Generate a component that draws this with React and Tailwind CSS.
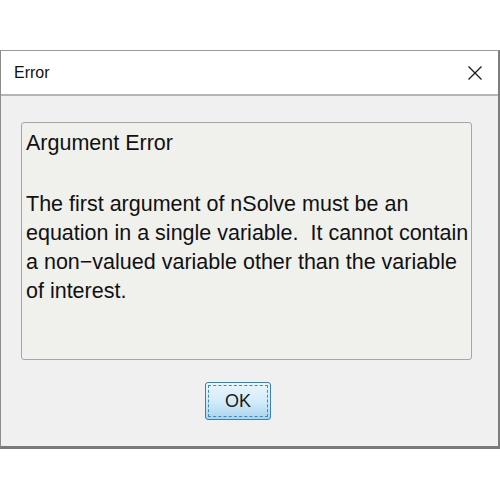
const CloseIcon = () => (
  <svg width="16" height="16" viewBox="0 0 16 16" className="block">
    <path d="M1.5 1.5 L14.5 14.5 M14.5 1.5 L1.5 14.5" stroke="#1a1a1a" strokeWidth="1.3" fill="none" />
  </svg>
);

const lines = [
  "The first argument of nSolve must be an",
  "equation in a single variable.\u00a0 It cannot contain",
  "a non\u2212valued variable other than the variable",
  "of interest.",
];

export default function App() {
  return (
    <div className="w-[500px] h-[500px] bg-white pt-[50px] font-['Liberation_Sans',Arial,sans-serif]">
      <div className="w-[500px] h-[399px] flex flex-col border-t border-l border-r-2 border-b-[3px] border-t-[#9a9a9a] border-l-[#8c8c8c] border-r-[#7d7d7d] border-b-[#7a7a7a]">
        {/* title bar */}
        <div className="h-[45px] flex items-center justify-between bg-white pl-[13px] pr-[15px] border-b-2 border-[#b5b5b5]">
          <span className="text-[16px] text-[#111] leading-none">Error</span>
          <CloseIcon />
        </div>

        {/* body */}
        <div className="flex-1 bg-[#f0f0f0] pl-[20px] pt-[26px]">
          <div className="w-[451px] h-[238px] rounded-[3px] border border-[#a6a6a6] bg-[#f0f0ed] px-[4px] pt-[6px] text-[21.5px] leading-[29px] text-[#111] whitespace-nowrap">
            <p>Argument Error</p>
            <p className="h-[32px]"></p>
            {lines.map((l, i) => (
              <p key={i}>{l}</p>
            ))}
          </div>

          <div className="pl-[184px] pt-[22px]">
            <button className="w-[66px] h-[38px] rounded-[3px] border border-[#3c7fb1] bg-gradient-to-b from-[#eaf6fd] via-[#d4ecfa] to-[#a8d4ef] p-[2px]">
              <div className="w-full h-full border border-dashed border-[#3a8bb8] rounded-[1px] flex items-center justify-center text-[18px] text-[#1a1a1a]">
                OK
              </div>
            </button>
          </div>
        </div>
      </div>
    </div>
  );
}
